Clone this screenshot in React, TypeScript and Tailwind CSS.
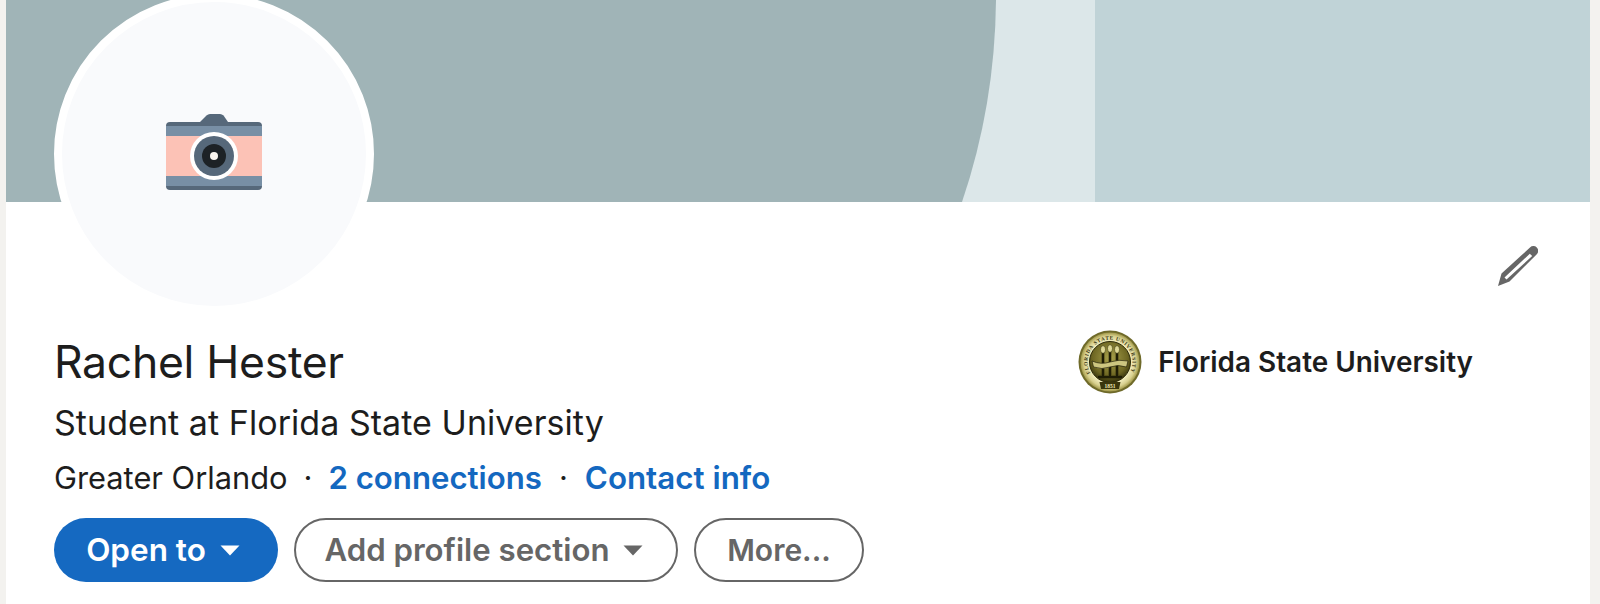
function Caret({ className }: { className: string }) {
  return (
    <svg width="20" height="11" viewBox="0 0 20 11" className={className}>
      <path d="M0.500 0.500h19L10 10.500z" fill="currentColor" />
    </svg>
  );
}

function CameraIcon() {
  return (
    <svg width="96" height="76" viewBox="0 0 96 76">
      <path d="M34 8l6.500-6.500Q42 0 44 0h10q2 0 3.500 1.500L62 8z" fill="#56687a" />
      <rect y="8" width="96" height="68" rx="4" fill="#56687a" />
      <rect y="12" width="96" height="60" fill="#788fa5" />
      <rect y="22" width="96" height="40" fill="#fcc2b6" />
      <circle cx="48" cy="42" r="24" fill="#fff" />
      <circle cx="48" cy="42" r="20" fill="#56687a" />
      <circle cx="48" cy="42" r="12" fill="#1d2226" />
      <circle cx="48" cy="42" r="4" fill="#f9f5ef" />
    </svg>
  );
}

function Seal() {
  return (
    <svg width="64" height="64" viewBox="0 0 64 64">
      <defs>
        <radialGradient id="band" cx="50%" cy="50%" r="50%">
          <stop offset="70%" stopColor="#f3eec0" />
          <stop offset="88%" stopColor="#d8d08e" />
          <stop offset="100%" stopColor="#a09748" />
        </radialGradient>
        <radialGradient id="center" cx="50%" cy="40%" r="62%">
          <stop offset="0%" stopColor="#a9a24c" />
          <stop offset="70%" stopColor="#6d6622" />
          <stop offset="100%" stopColor="#2d2a08" />
        </radialGradient>
        <path id="arc" d="M12.500 43.250A22.500 22.500 0 1 1 51.500 43.250" />
      </defs>
      <circle cx="32" cy="32" r="31.500" fill="#6f6a2a" />
      <circle cx="32" cy="32" r="29.500" fill="url(#band)" />
      <circle cx="32" cy="32" r="20.500" fill="url(#center)" stroke="#2d2a08" strokeWidth="1" />
      <text fontSize="5.400" fontFamily="'Liberation Serif', serif" fontWeight="700" fill="#37340f">
        <textPath href="#arc" textLength="92" lengthAdjust="spacing">
          FLORIDA STATE UNIVERSITY
        </textPath>
      </text>
      <path d="M21.500 52h21l-1.500 7h-18z" fill="#3a360d" />
      <text x="32" y="58" textAnchor="middle" fontSize="5.500" fontFamily="'Liberation Serif', serif" fontWeight="700" fill="#f0ebb8">
        1851
      </text>
      <g stroke="#1f1d05" strokeLinecap="round">
        <path d="M25 22v23M32 21v24M39 22v23" strokeWidth="2.600" />
        <path d="M21 47h22" strokeWidth="2.500" />
      </g>
      <g fill="#dfd996" stroke="#2d2a08" strokeWidth=".5">
        <ellipse cx="25" cy="19.500" rx="2.500" ry="3.800" />
        <ellipse cx="32" cy="18.500" rx="2.500" ry="3.800" />
        <ellipse cx="39" cy="19.500" rx="2.500" ry="3.800" />
      </g>
      <path d="M14 31q9 4 18 1t18-1l-1.500 6q-8.500-3-16.500 0t-16.500 0z" fill="#cdc680" stroke="#25230a" strokeWidth=".7" />
    </svg>
  );
}

function Pencil() {
  return (
    <svg width="40" height="40" viewBox="0 0 40 40">
      <path
        fillRule="evenodd"
        d="M32 1.500a4.800 4.800 0 0 1 6.800 6.800L11.500 35.500 0 40l3.500-12.500zM31.800 7.800L6.500 31.500l2 2L34.200 10z"
        fill="#666"
      />
    </svg>
  );
}

export default function App() {
  return (
    <div className="h-[604px] overflow-hidden bg-[#f3f2ef] pl-[6px] pr-[10px] font-['Inter',sans-serif]">
      <div className="relative h-full bg-white">
        <div className="h-[202px] bg-[#c0d3d7] overflow-hidden">
          <svg width="1089" height="202" viewBox="0 0 1089 202">
            <rect width="1089" height="202" fill="#dce7e9" />
            <path d="M0 0H990Q989 105 956 202H0z" fill="#a0b4b7" />
          </svg>
        </div>

        <div className="absolute left-[48px] top-[-6px] w-[320px] h-[320px] rounded-full border-[8px] border-white bg-[#f9fafc] flex items-center justify-center pb-[4px]">
          <CameraIcon />
        </div>

        <div className="flex justify-end pr-[52px] pt-[44px]">
          <Pencil />
        </div>

        <div className="pl-[48px] pr-[117px] pt-[44px]">
          <div className="flex items-center justify-between h-[64px]">
            <h1 className="text-[44.500px] leading-[48px] text-[#1d1d1d] tracking-[-0.3px]">Rachel Hester</h1>
            <div className="flex items-center gap-[16px]">
              <Seal />
              <span className="text-[27.900px] font-semibold text-[#1d1d1d] pt-[2px]">Florida State University</span>
            </div>
          </div>
          <p className="text-[34px] leading-[40px] tracking-[0.05px] text-[#1d1d1d] mt-[9px]">Student at Florida State University</p>
          <p className="text-[30.800px] leading-[40px] text-[#1d1d1d] mt-[15px] flex items-center">
            <span>Greater Orlando</span>
            <span className="mx-[16px]">·</span>
            <span className="font-semibold text-[#1468c0] text-[31.200px]">2 connections</span>
            <span className="ml-[17px] mr-[17px]">·</span>
            <span className="font-semibold text-[#1468c0] text-[31.300px]">Contact info</span>
          </p>
          <div className="flex items-center gap-[16px] mt-[20px]">
            <button className="h-[64px] w-[224px] rounded-full bg-[#1569c1] text-white text-[31.500px] font-semibold flex items-center justify-center gap-[14px] pr-[6px]">
              Open to
              <Caret className="text-white" />
            </button>
            <button className="h-[64px] w-[384px] rounded-full border-2 border-[#666] text-[#666] text-[31.200px] font-semibold flex items-center justify-center gap-[13px] pr-[5px]">
              Add profile section
              <Caret className="text-[#666]" />
            </button>
            <button className="h-[64px] w-[170px] rounded-full border-2 border-[#666] text-[#666] text-[30px] font-semibold flex items-center justify-center">
              More...
            </button>
          </div>
        </div>
      </div>
    </div>
  );
}
